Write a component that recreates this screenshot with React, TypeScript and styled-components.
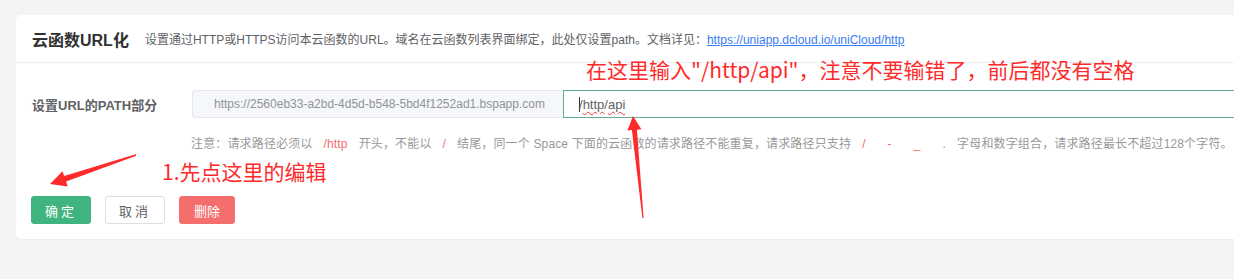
import React from 'react';
import styled, { createGlobalStyle } from 'styled-components';

const colors = {
  pageBg: '#f4f4f4',
  text: '#303133',
  label: '#606266',
  muted: '#999999',
  border: '#e4e7ed',
  green: '#3fb47f',
  red: '#f46e6e',
  mark: '#ff2b2b',
  link: '#3b7cf0',
};

const GlobalStyle = createGlobalStyle`
  html, body {
    margin: 0;
    padding: 0;
    background: ${colors.pageBg};
    font-family: "Liberation Sans", "Noto Sans CJK SC", sans-serif;
    overflow: hidden;
  }
`;

const Page = styled.div`
  position: relative;
  width: 1234px;
  height: 279px;
  padding: 15px 0 0 16px;
  box-sizing: border-box;
`;

const Card = styled.div`
  background: #fff;
  border-radius: 5px;
  margin-right: -30px;
  box-shadow: 0 1px 3px rgba(0, 0, 0, 0.04);
`;

const Header = styled.div`
  display: flex;
  align-items: center;
  height: 47px;
  padding: 0 16px;
  border-bottom: 1px solid #ebeef5;
`;

const Title = styled.h2`
  margin: 0 16px 0 0;
  font-size: 16px;
  font-weight: bold;
  color: ${colors.text};
`;

const Desc = styled.span`
  font-size: 12px;
  color: ${colors.label};

  a {
    color: ${colors.link};
    text-decoration: underline;
  }
`;

const Body = styled.div`
  padding: 27px 15px 15px;
`;

const FieldRow = styled.div`
  display: flex;
  align-items: center;
  margin-left: 1px;
`;

const Label = styled.div`
  width: 160px;
  font-size: 13px;
  font-weight: bold;
  color: ${colors.label};
`;

const Prefix = styled.div`
  width: 371px;
  height: 28px;
  box-sizing: border-box;
  display: flex;
  align-items: center;
  padding-left: 21px;
  background: #f5f7fa;
  border: 1px solid ${colors.border};
  border-right: none;
  border-radius: 4px 0 0 4px;
  font-size: 12px;
  color: #909399;
  white-space: nowrap;
  overflow: hidden;
`;

const PathInput = styled.div`
  flex: 1;
  height: 28px;
  box-sizing: border-box;
  display: flex;
  align-items: center;
  padding-left: 15px;
  border: 1px solid #5fae95;
  font-size: 13px;
  color: ${colors.label};
`;

const Caret = styled.span`
  display: inline-block;
  width: 1px;
  height: 15px;
  background: #333;
  margin-right: -1px;
`;

const Misspelled = styled.span`
  text-decoration: underline wavy #e33;
  text-underline-offset: 2px;
  text-decoration-thickness: 1px;
`;

const Note = styled.div`
  margin: 16px 0 0 160px;
  font-size: 12px;
  color: ${colors.muted};
  white-space: nowrap;
  letter-spacing: 0.15px;
`;

const Code = styled.span`
  color: ${colors.red};
  margin: 0 11px;
`;

const Actions = styled.div`
  display: flex;
  gap: 14px;
  margin-top: 45px;
`;

const Button = styled.button<{ $variant: 'primary' | 'plain' | 'danger' }>`
  height: 28px;
  padding: 0 ${p => (p.$variant === 'danger' ? 14 : 13)}px;
  border-radius: 3px;
  font-family: inherit;
  font-size: 13px;
  letter-spacing: ${p => (p.$variant === 'danger' ? 0 : 3)}px;
  cursor: pointer;
  border: 1px solid
    ${p => (p.$variant === 'primary' ? colors.green : p.$variant === 'danger' ? colors.red : '#dcdfe6')};
  background: ${p => (p.$variant === 'primary' ? colors.green : p.$variant === 'danger' ? colors.red : '#fff')};
  color: ${p => (p.$variant === 'plain' ? colors.label : '#fff')};
`;

const Annotation = styled.div<{ $x: number; $y: number }>`
  position: absolute;
  left: ${p => p.$x}px;
  top: ${p => p.$y}px;
  font-family: "Noto Sans CJK SC", sans-serif;
  font-size: 21px;
  line-height: 26px;
  color: ${colors.mark};
  white-space: nowrap;
  pointer-events: none;
`;

const Overlay = styled.svg`
  position: absolute;
  left: 0;
  top: 0;
  pointer-events: none;
`;

export default function App() {
  return (
    <>
      <GlobalStyle />
      <Page>
        <Card>
          <Header>
            <Title>云函数URL化</Title>
            <Desc>
              设置通过HTTP或HTTPS访问本云函数的URL。域名在云函数列表界面绑定，此处仅设置path。文档详见：
              <a href="#">https://uniapp.dcloud.io/uniCloud/http</a>
            </Desc>
          </Header>
          <Body>
            <FieldRow>
              <Label>设置URL的PATH部分</Label>
              <Prefix>https://2560eb33-a2bd-4d5d-b548-5bd4f1252ad1.bspapp.com</Prefix>
              <PathInput>
                <Caret />/<Misspelled>http</Misspelled>/<Misspelled>api</Misspelled>
              </PathInput>
            </FieldRow>
            <Note>
              注意：请求路径必须以<Code>/http</Code>开头，不能以<Code>/</Code>结尾，同一个 Space
              下面的云函数的请求路径不能重复，请求路径只支持<Code>/</Code>
              <Code>-</Code>
              <Code>_</Code>
              <Code>.</Code>字母和数字组合，请求路径最长不超过128个字符。
            </Note>
            <Actions>
              <Button $variant="primary">确定</Button>
              <Button $variant="plain">取消</Button>
              <Button $variant="danger">删除</Button>
            </Actions>
          </Body>
        </Card>
        <Annotation $x={586} $y={56}>
          在这里输入"/http/api"，注意不要输错了，前后都没有空格
        </Annotation>
        <Annotation $x={162} $y={158}>
          1.先点这里的编辑
        </Annotation>
        <Overlay width="1234" height="279" viewBox="0 0 1234 279">
          <polygon
            fill={colors.mark}
            points="135.7,154.2 64.1,176 62.5,171.2 50,184 67.7,186.4 66.1,181.6 136.3,155.8"
          />
          <polygon
            fill={colors.mark}
            points="633,116 641.4,129.2 636.9,129.7 643.6,218 642.4,218 631.9,130.1 627.4,130.6"
          />
        </Overlay>
      </Page>
    </>
  );
}
